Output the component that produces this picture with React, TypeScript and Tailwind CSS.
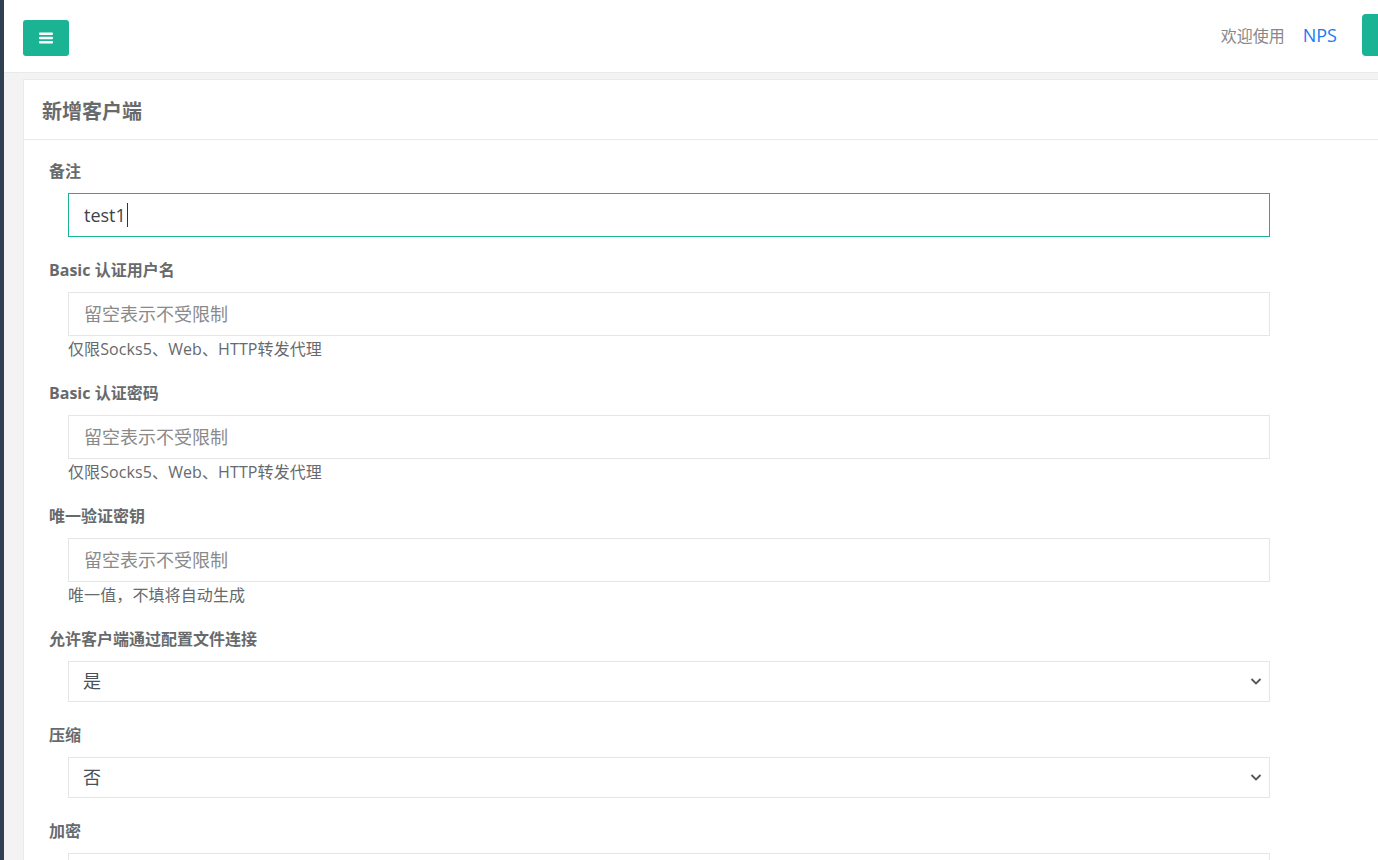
import React from "react";

const font = { fontFamily: "'Open Sans', 'Noto Sans CJK SC', sans-serif" };

function Label({ children }: { children: React.ReactNode }) {
  return (
    <label className="block h-[22px] text-[16px] leading-[22px] font-bold text-[#676a6c]">
      {children}
    </label>
  );
}

function TextField({ placeholder, help }: { placeholder: string; help?: string }) {
  return (
    <div className="ml-[19px] w-[1202px]">
      <input
        placeholder={placeholder}
        className="block w-full h-[44px] border border-[#e5e6e7] bg-white px-[15px] text-[18px] text-[#495057] placeholder:text-[#8a8a8a] outline-none"
        style={font}
      />
      {help && (
        <p className="h-[24px] pt-[2px] text-[16px] leading-[22px] tracking-[0.1px] text-[#676a6c]">{help}</p>
      )}
    </div>
  );
}

function SelectField({ options }: { options: string[] }) {
  return (
    <div className="relative ml-[19px] w-[1202px]">
      <select
        className="block w-full h-[41px] appearance-none border border-[#e5e6e7] bg-white pl-[14px] pr-8 text-[18px] text-[#495057] outline-none"
        style={font}
      >
        {options.map((o) => (
          <option key={o}>{o}</option>
        ))}
      </select>
      <svg
        className="pointer-events-none absolute right-[8px] top-[16px]"
        width="12"
        height="9"
        viewBox="0 0 12 9"
      >
        <path d="M1.5 2 L6 6.5 L10.5 2" fill="none" stroke="#555" strokeWidth="1.8" />
      </svg>
    </div>
  );
}

export default function App() {
  return (
    <div className="flex h-[860px] w-full overflow-hidden" style={font}>
      <div className="w-[4px] shrink-0 bg-[#2f4050]" />
      <div className="flex-1 min-w-0 bg-[#f3f3f4]">
        {/* top bar */}
        <div className="flex h-[73px] items-start justify-between border-b border-[#e7eaec] bg-white">
          <button className="ml-[19px] mt-[20px] flex h-[36px] w-[46px] items-center justify-center rounded-[3px] bg-[#1ab394]">
            <svg width="14" height="12" viewBox="0 0 14 12">
              <rect x="0" y="0.4" width="14" height="2.6" rx="1" fill="#fff" />
              <rect x="0" y="4.7" width="14" height="2.6" rx="1" fill="#fff" />
              <rect x="0" y="9" width="14" height="2.6" rx="1" fill="#fff" />
            </svg>
          </button>
          <div className="mr-[-26px] flex items-start">
            <span className="mt-[25px] text-[16px] leading-[22px] text-[#888]">欢迎使用</span>
            <span className="ml-[18px] mt-[23px] text-[18px] leading-[24px] text-[#1a7bf2]">NPS</span>
            <div className="ml-[25px] mt-[14px] h-[42px] w-[42px] rounded-[4px] bg-[#1ab394]" />
          </div>
        </div>

        {/* card */}
        <div className="ml-[19px] mr-[-30px] mt-[6px] border-t border-l border-[#e7eaec] bg-white">
          <div className="flex h-[60px] items-center border-b border-[#e7eaec] pl-[18px] pt-[4px]">
            <h5 className="text-[20px] font-bold text-[#676a6c]">新增客户端</h5>
          </div>
          <div className="pl-[25px] pt-[20px]">
            <div className="mb-[22px]">
              <Label>备注</Label>
              <div className="ml-[19px] mt-[11px] flex h-[44px] w-[1202px] items-center border border-[#1ab394] bg-white px-[15px] text-[18px] text-[#3d4349]">
                test1
                <span className="ml-[1px] inline-block h-[24px] w-[1px] bg-[#333]" />
              </div>
            </div>
            <div className="mb-[22px]">
              <Label>Basic 认证用户名</Label>
              <div className="mt-[11px]">
                <TextField placeholder="留空表示不受限制" help="仅限Socks5、Web、HTTP转发代理" />
              </div>
            </div>
            <div className="mb-[22px]">
              <Label>Basic 认证密码</Label>
              <div className="mt-[11px]">
                <TextField placeholder="留空表示不受限制" help="仅限Socks5、Web、HTTP转发代理" />
              </div>
            </div>
            <div className="mb-[22px]">
              <Label>唯一验证密钥</Label>
              <div className="mt-[11px]">
                <TextField placeholder="留空表示不受限制" help="唯一值，不填将自动生成" />
              </div>
            </div>
            <div className="mb-[22px]">
              <Label>允许客户端通过配置文件连接</Label>
              <div className="mt-[11px]">
                <SelectField options={["是", "否"]} />
              </div>
            </div>
            <div className="mb-[22px]">
              <Label>压缩</Label>
              <div className="mt-[11px]">
                <SelectField options={["否", "是"]} />
              </div>
            </div>
            <div className="mb-[22px]">
              <Label>加密</Label>
              <div className="mt-[11px]">
                <SelectField options={["否", "是"]} />
              </div>
            </div>
          </div>
        </div>
      </div>
    </div>
  );
}
